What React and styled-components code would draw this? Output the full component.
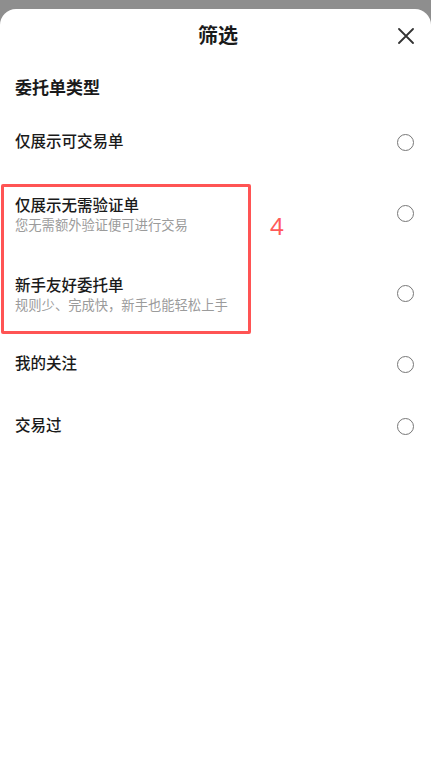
import React from "react";
import styled, { createGlobalStyle } from "styled-components";

const Global = createGlobalStyle`
  html, body { margin: 0; padding: 0; background: #8e8e8e; }
  body { font-family: "Noto Sans CJK SC", "Noto Sans", sans-serif; }
  * { box-sizing: border-box; }
`;

const Page = styled.div`
  padding-top: 9px;
  min-height: 773px;
  display: flex;
  flex-direction: column;
`;

const Sheet = styled.div`
  flex: 1;
  background: #fff;
  border-radius: 16px 16px 0 0;
  display: flex;
  flex-direction: column;
`;

const Header = styled.div`
  position: relative;
  height: 52px;
  display: flex;
  align-items: center;
  justify-content: center;
`;

const Title = styled.div`
  font-size: 20px;
  font-weight: 700;
  color: #1a1a1a;
  line-height: 24px;
  padding-left: 5px;
`;

const Close = styled.button`
  position: absolute;
  right: 17px;
  top: 19px;
  width: 16px;
  height: 16px;
  padding: 0;
  border: none;
  background: none;
  display: flex;
`;

const SectionTitle = styled.div`
  margin: 14px 0 12px 15px;
  font-size: 17px;
  font-weight: 700;
  line-height: 24px;
  color: #1a1a1a;
`;

const List = styled.div`
  position: relative;
  display: flex;
  flex-direction: column;
`;

const Row = styled.div`
  display: flex;
  align-items: center;
  justify-content: space-between;
  padding: 20px 17px 20px 15px;
`;

const Texts = styled.div`
  display: flex;
  flex-direction: column;
  margin: ${(p) => (p.$single ? "-2px 0 2px" : "0 0 -2px")};
`;

const Label = styled.div`
  font-size: 15.5px;
  font-weight: 500;
  line-height: 22px;
  color: #1a1a1a;
`;

const Sub = styled.div`
  font-size: 13.3px;
  line-height: 20px;
  color: #9b9b9b;
`;

const Radio = styled.span`
  width: 17px;
  height: 17px;
  border-radius: 50%;
  border: 1.6px solid #777;
  flex-shrink: 0;
`;

const Highlight = styled.div`
  position: absolute;
  left: 1px;
  top: 73px;
  width: 250px;
  height: 150px;
  border: 3px solid #ff5454;
  border-radius: 2px;
  pointer-events: none;
`;

const Marker = styled.div`
  position: absolute;
  left: 270px;
  top: 101px;
  font-family: "Noto Sans", sans-serif;
  font-size: 24px;
  line-height: 28px;
  color: #ff5a5a;
  font-weight: 400;
`;

const items = [
  { label: "仅展示可交易单" },
  { label: "仅展示无需验证单", sub: "您无需额外验证便可进行交易" },
  { label: "新手友好委托单", sub: "规则少、完成快，新手也能轻松上手" },
  { label: "我的关注" },
  { label: "交易过" },
];

export default function App() {
  return (
    <>
      <Global />
      <Page>
        <Sheet>
          <Header>
            <Title>筛选</Title>
            <Close aria-label="关闭">
              <svg width="16" height="16" viewBox="0 0 16 16">
                <path d="M1 1 L15 15 M15 1 L1 15" stroke="#333" strokeWidth="1.8" strokeLinecap="round" />
              </svg>
            </Close>
          </Header>
          <SectionTitle>委托单类型</SectionTitle>
          <List>
            {items.map((it) => (
              <Row key={it.label}>
                <Texts $single={!it.sub}>
                  <Label>{it.label}</Label>
                  {it.sub && <Sub>{it.sub}</Sub>}
                </Texts>
                <Radio />
              </Row>
            ))}
            <Highlight />
            <Marker>4</Marker>
          </List>
        </Sheet>
      </Page>
    </>
  );
}
